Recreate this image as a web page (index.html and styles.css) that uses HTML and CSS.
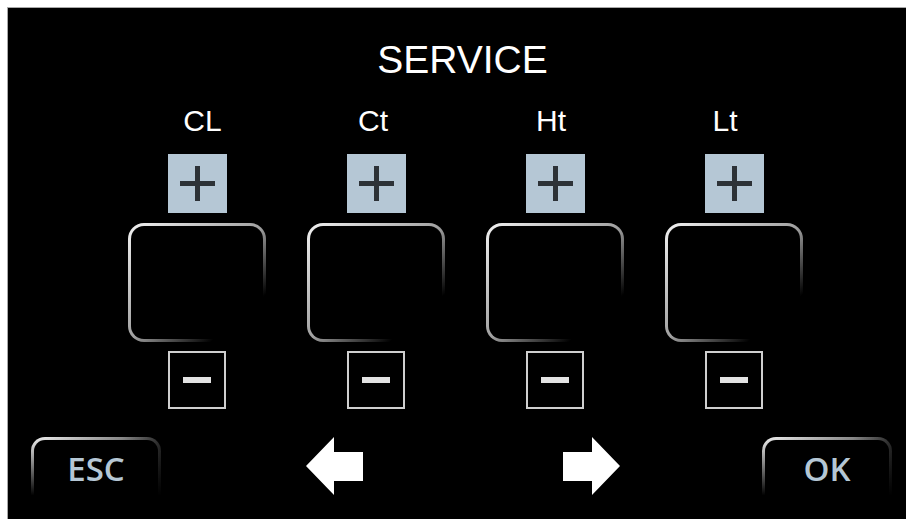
FILE: index.html
```html
<html>
  <head>
    <meta charset="UTF-8" />
    <title>SERVICE</title>
    <link rel="stylesheet" href="styles.css">
  </head>
  <body>
    <div class="panel">
      <h1 class="title">SERVICE</h1>
      <div class="cols">
        <div class="col">
          <div class="label label_cl">CL</div>
          <div class="btn_plus"><svg width="35" height="35" viewBox="0 0 35 35"><rect x="0" y="15" width="35" height="5" /><rect x="15" y="0" width="5" height="35" /></svg></div>
          <div class="value"></div>
          <div class="btn_minus"><span></span></div>
        </div>
        <div class="col">
          <div class="label label_ct">Ct</div>
          <div class="btn_plus"><svg width="35" height="35" viewBox="0 0 35 35"><rect x="0" y="15" width="35" height="5" /><rect x="15" y="0" width="5" height="35" /></svg></div>
          <div class="value"></div>
          <div class="btn_minus"><span></span></div>
        </div>
        <div class="col">
          <div class="label label_ht">Ht</div>
          <div class="btn_plus"><svg width="35" height="35" viewBox="0 0 35 35"><rect x="0" y="15" width="35" height="5" /><rect x="15" y="0" width="5" height="35" /></svg></div>
          <div class="value"></div>
          <div class="btn_minus"><span></span></div>
        </div>
        <div class="col">
          <div class="label label_lt">Lt</div>
          <div class="btn_plus"><svg width="35" height="35" viewBox="0 0 35 35"><rect x="0" y="15" width="35" height="5" /><rect x="15" y="0" width="5" height="35" /></svg></div>
          <div class="value"></div>
          <div class="btn_minus"><span></span></div>
        </div>
      </div>
      <div class="bottom">
        <div class="btn_nav">ESC</div>
        <svg class="arrow arrow_left" width="57" height="58" viewBox="0 0 57 58"><polygon points="0,29 28,0 28,15 57,15 57,44 28,44 28,58" /></svg>
        <svg class="arrow arrow_right" width="57" height="58" viewBox="0 0 57 58"><polygon points="57,29 29,0 29,15 0,15 0,44 29,44 29,58" /></svg>
        <div class="btn_nav btn_ok">OK</div>
      </div>
    </div>
  </body>
</html>
```
FILE: styles.css
```css
* {
  margin: 0;
  padding: 0;
  box-sizing: border-box;
}
body {
  background: #fff;
  font-family: "Liberation Sans", Arial, sans-serif;
  overflow: hidden;
}
.panel {
  margin: 7px 0 0 7px;
  height: 512px;
  background: #000;
  border-top: 1px solid #a8a8a8;
  border-left: 1px solid #a8a8a8;
  overflow: hidden;
}
.title {
  padding: 32px 0 0 11px;
  font-size: 39px;
  line-height: 39px;
  font-weight: normal;
  color: #fff;
  text-align: center;
}
.cols {
  display: flex;
  gap: 41px;
  padding-left: 120px;
  margin-top: 27px;
}
.col {
  width: 138px;
  display: flex;
  flex-direction: column;
  align-items: center;
}
.label {
  font-size: 30px;
  line-height: 30px;
  color: #fff;
}
.label_cl {
  margin-left: 11px;
}
.label_ct {
  margin-right: 6px;
}
.label_ht {
  margin-right: 8px;
}
.label_lt {
  margin-right: 18px;
}
.btn_plus {
  width: 59px;
  height: 59px;
  margin-top: 18px;
  background: #b5c7d5;
  display: flex;
  align-items: center;
  justify-content: center;
}
.btn_plus svg {
  fill: #2d3237;
}
.value {
  width: 138px;
  height: 119px;
  margin-top: 10px;
  border: 3px solid transparent;
  border-radius: 16px;
  background: linear-gradient(#000, #000) padding-box,
    linear-gradient(to bottom right, #f2f2f2 0%, #a0a0a0 50%, #000 80%) border-box;
}
.btn_minus {
  width: 58px;
  height: 58px;
  margin-top: 9px;
  border: 2px solid #cfcfcf;
  display: flex;
  align-items: center;
  justify-content: center;
}
.btn_minus span {
  width: 28px;
  height: 6px;
  background: #e3e3e3;
}
.bottom {
  display: flex;
  align-items: flex-start;
  padding-left: 23px;
  margin-top: 28px;
}
.btn_nav {
  width: 130px;
  height: 75px;
  padding-top: 11px;
  border: 3px solid transparent;
  border-radius: 14px;
  background: linear-gradient(#000, #000) padding-box,
    linear-gradient(to bottom, rgba(0, 0, 0, 0) 0%, #000 78%) border-box,
    linear-gradient(to right, #f5f5f5 0%, #8a8a8a 70%, #2a2a2a 100%) border-box;
  font-family: "Open Sans", sans-serif;
  font-weight: 600;
  font-size: 33px;
  line-height: 36px;
  color: #b5c7d5;
  text-align: center;
}
.arrow {
  fill: #fff;
}
.arrow_left {
  margin-left: 145px;
}
.arrow_right {
  margin-left: 200px;
}
.btn_ok {
  margin-left: 142px;
}
```
